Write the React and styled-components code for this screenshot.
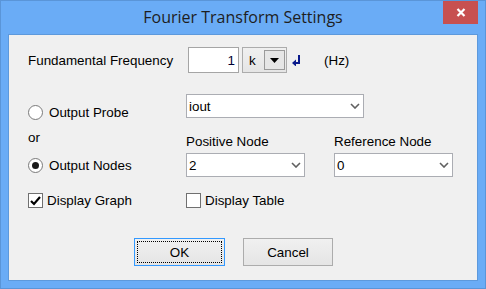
import React from "react";
import styled, { createGlobalStyle } from "styled-components";

const GlobalStyle = createGlobalStyle`
  html, body {
    margin: 0;
    padding: 0;
    background: #6aacf6;
  }
  * {
    box-sizing: border-box;
  }
`;

// window frame
const Window = styled.div`
  width: 486px;
  height: 289px;
  background: #6aacf6;
  border: 1px solid #5a95d8;
  display: flex;
  flex-direction: column;
  font-family: "Liberation Sans", Arial, sans-serif;
  font-size: 13.4px;
  color: #000;
`;

const TitleBar = styled.div`
  position: relative;
  height: 33px;
  display: flex;
  align-items: center;
  justify-content: center;
`;

const Title = styled.div`
  font-family: "Open Sans", "Noto Sans", sans-serif;
  font-size: 16px;
  color: #1e1e1e;
  padding-bottom: 2px;
`;

const CloseButton = styled.div`
  position: absolute;
  top: 0;
  right: 7px;
  width: 35px;
  height: 23px;
  background: #c75050;
  display: flex;
  align-items: center;
  justify-content: center;
`;

const Client = styled.div`
  margin: 0 7px;
  height: 247px;
  background: #f0f0f0;
  border: 1px solid #5d99dc;
  padding: 12px 0 0 19px;
  display: flex;
  flex-direction: column;
`;

const Row = styled.div`
  display: flex;
  align-items: ${(p) => p.align || "center"};
  height: ${(p) => p.h}px;
  margin-top: ${(p) => p.mt || 0}px;
`;

const Cell = styled.div`
  width: ${(p) => p.w}px;
  flex: none;
  display: flex;
  align-items: center;
  margin-top: ${(p) => p.mt || 0}px;
  margin-left: ${(p) => p.ml || 0}px;
`;

const Label = styled.span`
  line-height: 15px;
  white-space: nowrap;
`;

const NumberBox = styled.div`
  width: 51px;
  height: 26px;
  margin-left: 2px;
  background: #fff;
  border: 1px solid #a5a5a5;
  display: flex;
  align-items: center;
  justify-content: flex-end;
  padding-right: 3px;
  color: #000033;
`;

const UnitBox = styled.div`
  width: 45px;
  height: 26px;
  margin-left: 3px;
  border: 1px solid #acacac;
  background: linear-gradient(#f0f0f0, #e5e5e5);
  display: flex;
  align-items: center;
  padding: 0 1px 0 6px;
  justify-content: space-between;
`;

const DropButton = styled.div`
  width: 21px;
  height: 20px;
  border: 1px solid #9a9a9a;
  background: #e6e6e6;
  display: flex;
  align-items: center;
  justify-content: center;
`;

const EnterArrow = styled.svg`
  margin-left: 5px;
  margin-top: 1px;
`;

const Combo = styled.div`
  width: ${(p) => p.w}px;
  height: 24px;
  background: #fff;
  border: 1px solid #abadb3;
  display: flex;
  align-items: center;
  justify-content: space-between;
  padding: 0 3px 0 2px;
`;

const Choice = styled.label`
  display: flex;
  align-items: center;
  gap: ${(p) => p.gap || 5}px;
  white-space: nowrap;
`;

const RadioCircle = styled.span`
  width: 15px;
  height: 15px;
  border-radius: 50%;
  border: 1px solid #7a7a7a;
  background: #fff;
  display: flex;
  align-items: center;
  justify-content: center;
  &::after {
    content: "";
    width: 7px;
    height: 7px;
    border-radius: 50%;
    background: #1a1a1a;
    display: ${(p) => (p.checked ? "block" : "none")};
  }
`;

const CheckBox = styled.span`
  width: 15px;
  height: 15px;
  border: 1px solid #707070;
  background: #fff;
  display: flex;
  align-items: center;
  justify-content: center;
`;

const ButtonRow = styled.div`
  display: flex;
  gap: 18px;
  margin-top: 30px;
  margin-left: 106px;
`;

const Button = styled.div`
  width: ${(p) => p.w}px;
  height: 28px;
  border: 1px solid ${(p) => (p.focused ? "#3399ff" : "#acacac")};
  background: linear-gradient(#f0f0f0, #e5e5e5);
  display: flex;
  align-items: center;
  justify-content: center;
  padding: 2px;
`;

const FocusRect = styled.div`
  width: 100%;
  height: 100%;
  border: 1px dotted ${(p) => (p.on ? "#000" : "transparent")};
  display: flex;
  align-items: center;
  justify-content: center;
`;

const Chevron = () => (
  <svg width="10" height="6" viewBox="0 0 10 6">
    <path d="M1 1 L5 5 L9 1" fill="none" stroke="#606060" strokeWidth="1.6" />
  </svg>
);

const App = () => {
  return (
    <>
      <GlobalStyle />
      <Window>
        <TitleBar>
          <Title>Fourier Transform Settings</Title>
          <CloseButton>
            <svg width="10" height="9" viewBox="0 0 10 9">
              <path d="M1.5 1 L8.5 8 M8.5 1 L1.5 8" stroke="#fff" strokeWidth="2.2" />
            </svg>
          </CloseButton>
        </TitleBar>
        <Client>
          <Row h={26}>
            <Cell w={158}>
              <Label>Fundamental Frequency</Label>
            </Cell>
            <NumberBox>1</NumberBox>
            <UnitBox>
              <span>k</span>
              <DropButton>
                <svg width="9" height="5" viewBox="0 0 9 5">
                  <path d="M0 0 L9 0 L4.5 5 Z" fill="#000" />
                </svg>
              </DropButton>
            </UnitBox>
            <EnterArrow width="9" height="11" viewBox="0 0 9 11">
              <path d="M7 0 L7 8 L3 8" fill="none" stroke="#0a1a8c" strokeWidth="2" />
              <path d="M0 8 L4 4.5 L4 11.5 Z" fill="#0a1a8c" />
            </EnterArrow>
            <Cell w={40} ml={23}>
              <Label>(Hz)</Label>
            </Cell>
          </Row>

          <Row h={24} mt={21} align="flex-start">
            <Cell w={158} mt={11}>
              <Choice gap={6}>
                <RadioCircle />
                <Label>Output Probe</Label>
              </Choice>
            </Cell>
            <Combo w={178}>
              <span>iout</span>
              <Chevron />
            </Combo>
          </Row>

          <Row h={35} align="flex-start">
            <Cell w={158} mt={12}>
              <Label>or</Label>
            </Cell>
            <Cell w={148} mt={16}>
              <Label>Positive Node</Label>
            </Cell>
            <Cell w={130} mt={16}>
              <Label>Reference Node</Label>
            </Cell>
          </Row>

          <Row h={24}>
            <Cell w={158}>
              <Choice gap={6}>
                <RadioCircle checked />
                <Label>Output Nodes</Label>
              </Choice>
            </Cell>
            <Cell w={148}>
              <Combo w={119}>
                <span>2</span>
                <Chevron />
              </Combo>
            </Cell>
            <Combo w={119}>
              <span>0</span>
              <Chevron />
            </Combo>
          </Row>

          <Row h={15} mt={16}>
            <Cell w={158}>
              <Choice gap={4}>
                <CheckBox>
                  <svg width="11" height="10" viewBox="0 0 11 10">
                    <path d="M1 5 L4 8 L10 1" fill="none" stroke="#000" strokeWidth="2.2" />
                  </svg>
                </CheckBox>
                <Label>Display Graph</Label>
              </Choice>
            </Cell>
            <Choice gap={4}>
              <CheckBox />
              <Label>Display Table</Label>
            </Choice>
          </Row>

          <ButtonRow>
            <Button w={91} focused>
              <FocusRect on>OK</FocusRect>
            </Button>
            <Button w={90}>
              <FocusRect>Cancel</FocusRect>
            </Button>
          </ButtonRow>
        </Client>
      </Window>
    </>
  );
};

export default App;
